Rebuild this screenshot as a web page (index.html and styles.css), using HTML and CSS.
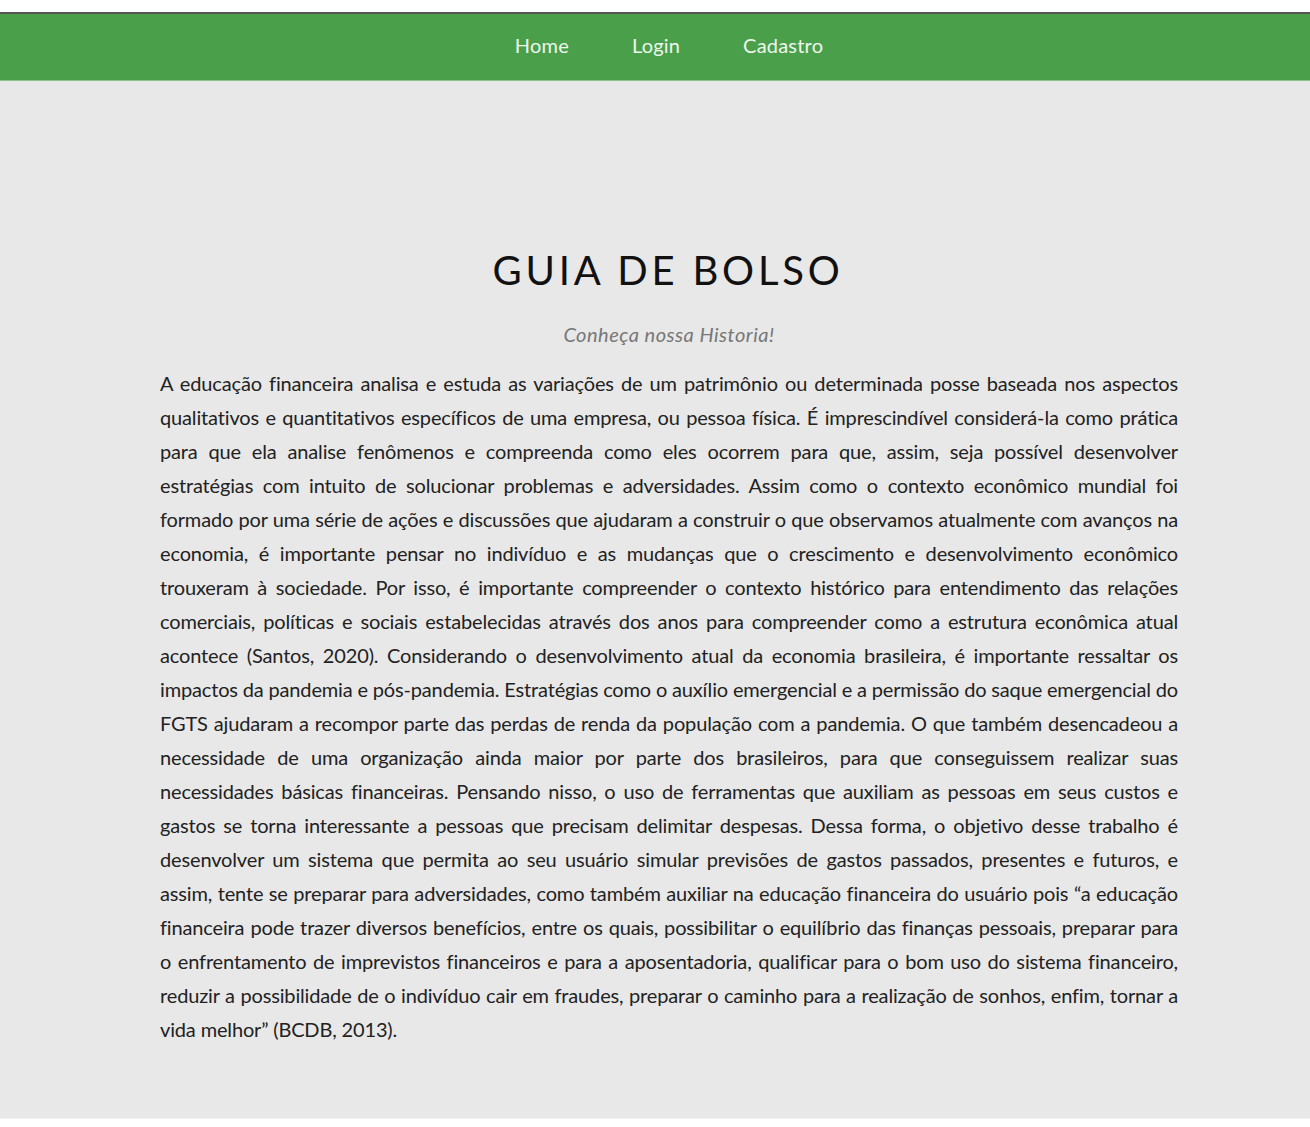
FILE: index.html
```html
<!DOCTYPE html>
<html lang="pt-BR">
<head>
<meta charset="utf-8">
<title>Guia de Bolso</title>
<link rel="stylesheet" href="styles.css">
</head>
<body>
<div class="topstrip"></div>
<header class="navbar">
  <nav class="nav">
    <a href="#" class="nav-link">Home</a>
    <a href="#" class="nav-link">Login</a>
    <a href="#" class="nav-link">Cadastro</a>
  </nav>
</header>
<main class="main">
  <h1 class="title">GUIA DE BOLSO</h1>
  <p class="subtitle">Conheça nossa Historia!</p>
  <p class="text">
    <span class="line">A educação financeira analisa e estuda as variações de um patrimônio ou determinada posse baseada nos aspectos</span>
    <span class="line">qualitativos e quantitativos específicos de uma empresa, ou pessoa física. É imprescindível considerá-la como prática</span>
    <span class="line">para que ela analise fenômenos e compreenda como eles ocorrem para que, assim, seja possível desenvolver</span>
    <span class="line">estratégias com intuito de solucionar problemas e adversidades. Assim como o contexto econômico mundial foi</span>
    <span class="line">formado por uma série de ações e discussões que ajudaram a construir o que observamos atualmente com avanços na</span>
    <span class="line">economia, é importante pensar no indivíduo e as mudanças que o crescimento e desenvolvimento econômico</span>
    <span class="line">trouxeram à sociedade. Por isso, é importante compreender o contexto histórico para entendimento das relações</span>
    <span class="line">comerciais, políticas e sociais estabelecidas através dos anos para compreender como a estrutura econômica atual</span>
    <span class="line">acontece (Santos, 2020). Considerando o desenvolvimento atual da economia brasileira, é importante ressaltar os</span>
    <span class="line">impactos da pandemia e pós-pandemia. Estratégias como o auxílio emergencial e a permissão do saque emergencial do</span>
    <span class="line">FGTS ajudaram a recompor parte das perdas de renda da população com a pandemia. O que também desencadeou a</span>
    <span class="line">necessidade de uma organização ainda maior por parte dos brasileiros, para que conseguissem realizar suas</span>
    <span class="line">necessidades básicas financeiras. Pensando nisso, o uso de ferramentas que auxiliam as pessoas em seus custos e</span>
    <span class="line">gastos se torna interessante a pessoas que precisam delimitar despesas. Dessa forma, o objetivo desse trabalho é</span>
    <span class="line">desenvolver um sistema que permita ao seu usuário simular previsões de gastos passados, presentes e futuros, e</span>
    <span class="line">assim, tente se preparar para adversidades, como também auxiliar na educação financeira do usuário pois “a educação</span>
    <span class="line">financeira pode trazer diversos benefícios, entre os quais, possibilitar o equilíbrio das finanças pessoais, preparar para</span>
    <span class="line">o enfrentamento de imprevistos financeiros e para a aposentadoria, qualificar para o bom uso do sistema financeiro,</span>
    <span class="line">reduzir a possibilidade de o indivíduo cair em fraudes, preparar o caminho para a realização de sonhos, enfim, tornar a</span>
    <span class="line">vida melhor” (BCDB, 2013).</span>
  </p>
</main>
</body>
</html>
```

FILE: styles.css
```css
html, body {
  margin: 0;
  padding: 0;
  background: #ffffff;
  font-family: Lato, "Open Sans", sans-serif;
}

.topstrip {
  height: 12px;
  background: #ffffff;
  border-bottom: 2px solid #555555;
}

.navbar {
  height: 66px;
  background: #4aa04a;
  border-bottom: 1px solid #8cc58c;
  padding-left: 28px;
  display: flex;
  align-items: center;
  justify-content: center;
}

.nav {
  display: flex;
  gap: 63px;
  margin-top: -4px;
}

.nav-link {
  color: #eef6ee;
  text-decoration: none;
  font-size: 20px;
  letter-spacing: 0.2px;
}

.main {
  background: #e8e8e8;
  padding: 165px 132px 72px 160px;
  border-bottom: 1px solid #f2f2f2;
}

.title {
  margin: 0;
  text-align: center;
  font-weight: 400;
  font-size: 40px;
  line-height: 48px;
  letter-spacing: 3.8px;
  color: #111111;
  padding-right: 2px;
}

.subtitle {
  margin: 28px 0 0;
  text-align: center;
  font-style: italic;
  font-size: 20px;
  line-height: 24px;
  color: #777777;
  letter-spacing: 0.5px;
}

.text {
  margin: 20px 0 0;
  font-size: 20px;
  line-height: 34px;
  letter-spacing: -0.15px;
  word-spacing: -3px;
  color: #222222;
}

.line {
  display: block;
  white-space: nowrap;
  text-align: justify;
  text-align-last: justify;
}

.line:last-child {
  text-align-last: left;
  word-spacing: normal;
}
```
